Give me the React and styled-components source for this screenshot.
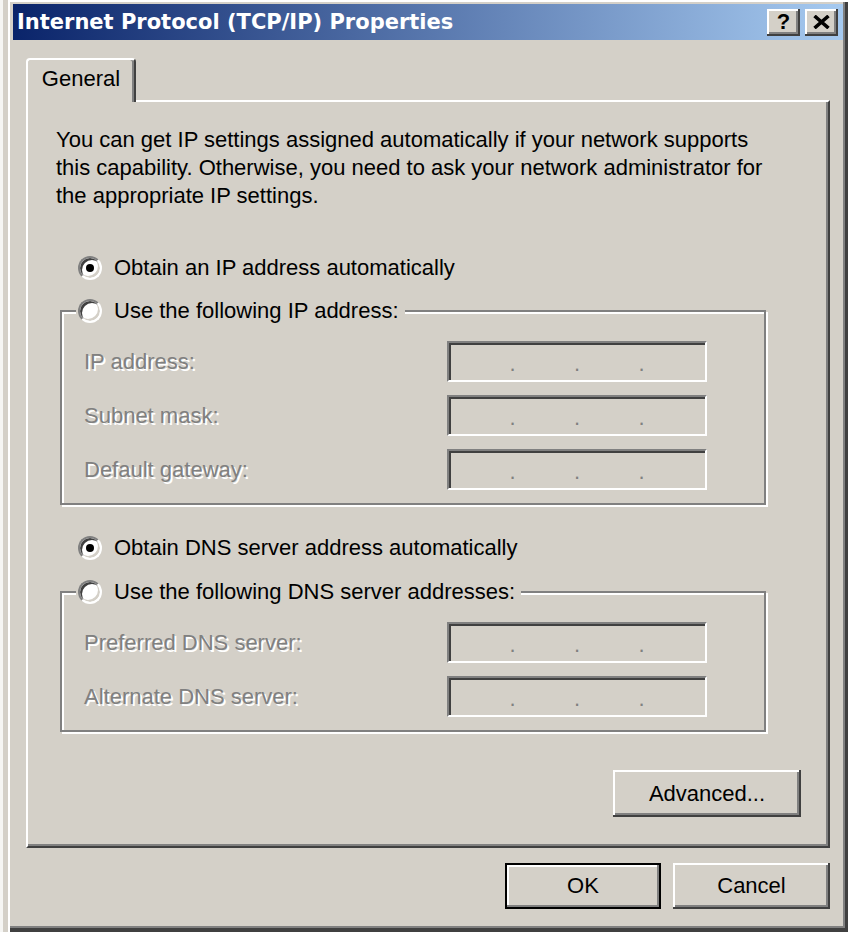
import React from 'react';
import styled, { createGlobalStyle, css } from 'styled-components';

const ipFields = ['IP address:', 'Subnet mask:', 'Default gateway:'];
const dnsFields = ['Preferred DNS server:', 'Alternate DNS server:'];

export default function App() {
  return (
    <Window>
      <GlobalStyle />
      <TitleBar>
        <TitleText>Internet Protocol (TCP/IP) Properties</TitleText>
        <CaptionButtons>
          <CaptionButton>?</CaptionButton>
          <CaptionButton>
            <svg width="17" height="14" viewBox="0 0 17 14">
              <path d="M1.5 1 L15.5 13 M15.5 1 L1.5 13" stroke="#000" strokeWidth="3.6" />
            </svg>
          </CaptionButton>
        </CaptionButtons>
      </TitleBar>
      <Body>
        <TabStrip>
          <Tab>General</Tab>
        </TabStrip>
        <Panel>
          <Intro>
            You can get IP settings assigned automatically if your network supports<br />
            this capability. Otherwise, you need to ask your network administrator for<br />
            the appropriate IP settings.
          </Intro>
          <RadioRow $top={44}>
            <Radio $checked />
            <span>Obtain an IP address automatically</span>
          </RadioRow>
          <Group $top={15}>
            <Legend>
              <Radio />
              <span>Use the following IP address:</span>
            </Legend>
            <Fields>
              {ipFields.map((label) => (
                <React.Fragment key={label}>
                  <FieldLabel>{label}</FieldLabel>
                  <IpInput />
                </React.Fragment>
              ))}
            </Fields>
          </Group>
          <RadioRow $top={29}>
            <Radio $checked />
            <span>Obtain DNS server address automatically</span>
          </RadioRow>
          <Group $top={16}>
            <Legend>
              <Radio />
              <span>Use the following DNS server addresses:</span>
            </Legend>
            <Fields>
              {dnsFields.map((label) => (
                <React.Fragment key={label}>
                  <FieldLabel>{label}</FieldLabel>
                  <IpInput />
                </React.Fragment>
              ))}
            </Fields>
          </Group>
          <AdvancedButton $w={188} $h={47}>Advanced...</AdvancedButton>
        </Panel>
        <Footer>
          <Button $w={156} $h={46} $default>OK</Button>
          <Button $w={157} $h={46}>Cancel</Button>
        </Footer>
      </Body>
    </Window>
  );
}

function IpInput() {
  return (
    <IpBox>
      <IpPart />
      <IpDot>.</IpDot>
      <IpPart />
      <IpDot>.</IpDot>
      <IpPart />
      <IpDot>.</IpDot>
      <IpPart />
    </IpBox>
  );
}

const GlobalStyle = createGlobalStyle`
  html, body {
    margin: 0;
    padding: 0;
    background: #d4d0c8;
  }
  body {
    font-family: "Liberation Sans", Arial, sans-serif;
    font-size: 22px;
    color: #000;
  }
`

const Window = styled.div`
  width: 848px;
  height: 932px;
  box-sizing: border-box;
  padding: 4px 5px 0 13px;
  background: #d4d0c8;
  box-shadow:
    inset 3px 0 0 #f6f6f4,
    inset 8px 0 0 #d4d0c8,
    inset 10px 0 0 #fff,
    inset 0 2px 0 #fff,
    inset -3px -4px 0 #404040,
    inset -5px -6px 0 #808080;
`

const TitleBar = styled.div`
  height: 36px;
  display: flex;
  align-items: center;
  justify-content: space-between;
  padding: 0 5px 0 4px;
  background: linear-gradient(to right, #0a246a, #a6caf0);
`

const TitleText = styled.span`
  color: #fff;
  font-family: "DejaVu Sans", Verdana, sans-serif;
  font-weight: bold;
  font-size: 21px;
  white-space: nowrap;
`

const CaptionButtons = styled.div`
  display: flex;
  gap: 5px;
`

const CaptionButton = styled.span`
  width: 33px;
  height: 27px;
  display: flex;
  align-items: center;
  justify-content: center;
  background: #d4d0c8;
  font-weight: bold;
  font-size: 22px;
  box-shadow:
    inset -2px -2px 0 #404040,
    inset 2px 2px 0 #fff,
    inset -4px -4px 0 #808080;
`

const Body = styled.div`
  padding: 18px 13px 0;
`

const TabStrip = styled.div`
  display: flex;
`

const Tab = styled.div`
  position: relative;
  z-index: 1;
  width: 110px;
  height: 44px;
  margin-bottom: -2px;
  box-sizing: border-box;
  padding-bottom: 4px;
  display: flex;
  align-items: center;
  justify-content: center;
  background: #d4d0c8;
  border-top: 2px solid #fff;
  border-left: 2px solid #fff;
  border-right: 2px solid #404040;
  border-radius: 4px 4px 0 0;
  box-shadow: inset -2px 0 0 #808080;
`

const Panel = styled.div`
  height: 748px;
  box-sizing: border-box;
  border: 2px solid;
  border-color: #fff #404040 #404040 #fff;
  box-shadow: inset -2px -2px 0 #808080;
  padding: 24px 0 0 28px;
  display: flex;
  flex-direction: column;
  align-items: flex-start;
`

const Intro = styled.p`
  margin: 0;
  line-height: 28px;
  white-space: nowrap;
`

const RadioRow = styled.div`
  display: flex;
  align-items: center;
  gap: 12px;
  height: 28px;
  margin: ${(p) => p.$top}px 0 0 22px;
  white-space: nowrap;
`

const Radio = styled.span`
  position: relative;
  flex: none;
  width: 24px;
  height: 24px;
  box-sizing: border-box;
  border-radius: 50%;
  border: 2px solid;
  border-color: #808080 #fff #fff #808080;
  background: #fff;
  box-shadow:
    inset 2px 2px 0 #404040,
    inset -2px -2px 0 #d4d0c8;

  ${(p) => p.$checked && css`
    &::after {
      content: '';
      position: absolute;
      left: 6px;
      top: 6px;
      width: 8px;
      height: 8px;
      border-radius: 50%;
      background: #000;
    }
  `}
`

const Group = styled.fieldset`
  width: 706px;
  box-sizing: border-box;
  min-width: 0;
  margin: ${(p) => p.$top}px 0 0 4px;
  padding: 16px 57px 13px 22px;
  border: 2px solid #808080;
  box-shadow:
    inset 2px 2px 0 #fff,
    2px 2px 0 #fff;
`

const Legend = styled.legend`
  display: flex;
  align-items: center;
  gap: 12px;
  height: 28px;
  margin-left: -8px;
  padding: 0 6px 0 2px;
  background: #d4d0c8;
  white-space: nowrap;
`

const Fields = styled.div`
  display: grid;
  grid-template-columns: 1fr 260px;
  row-gap: 13px;
  align-items: center;
`

const FieldLabel = styled.span`
  color: #808080;
  text-shadow: 2px 2px 0 #fff;
  white-space: nowrap;
`

const IpBox = styled.div`
  height: 41px;
  box-sizing: border-box;
  display: flex;
  align-items: center;
  padding: 0 2px;
  background: #d4d0c8;
  border: 2px solid;
  border-color: #808080 #fff #fff #808080;
  box-shadow:
    inset 2px 2px 0 #404040,
    inset -2px -2px 0 #d4d0c8;
`

const IpPart = styled.span`
  flex: 1;
`

const IpDot = styled.span`
  color: #808080;
  line-height: 1;
  padding-top: 4px;
`

const Button = styled.button`
  width: ${(p) => p.$w}px;
  height: ${(p) => p.$h}px;
  padding: 0;
  font: inherit;
  color: #000;
  background: #d4d0c8;
  border: none;
  box-shadow:
    inset -2px -2px 0 #404040,
    inset 2px 2px 0 #fff,
    inset -4px -4px 0 #808080;

  ${(p) => p.$default && css`
    border: 2px solid #000;
    box-shadow:
      inset -2px -2px 0 #808080,
      inset 2px 2px 0 #fff;
  `}
`

const AdvancedButton = styled(Button)`
  align-self: flex-end;
  margin: 38px 27px 0 0;
`

const Footer = styled.div`
  display: flex;
  justify-content: flex-end;
  gap: 12px;
  margin-top: 15px;
`
